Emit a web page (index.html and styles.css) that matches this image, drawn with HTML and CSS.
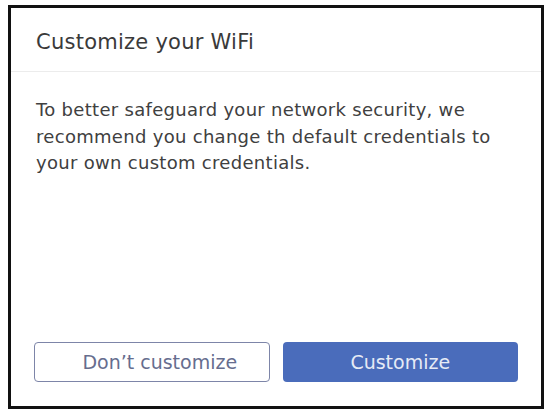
FILE: index.html
```html
<!DOCTYPE html>
<html>
<head>
<meta charset="utf-8">
<link rel="stylesheet" href="styles.css">
</head>
<body>
<div class="dialog">
  <div class="header">Customize your WiFi</div>
  <div class="body">
    <p class="message">To better safeguard your network security, we<br>recommend you change th default credentials to<br>your own custom credentials.</p>
  </div>
  <div class="actions">
    <button class="btn btn-outline">Don’t customize</button>
    <button class="btn btn-primary">Customize</button>
  </div>
</div>
</body>
</html>
```
FILE: styles.css
```css
html, body {
  margin: 0;
  padding: 0;
  background: #ffffff;
}
body {
  padding: 5px 6px 4px 8px;
  font-family: "DejaVu Sans", "Liberation Sans", sans-serif;
}
.dialog {
  box-sizing: border-box;
  width: 536px;
  height: 404px;
  border: 3px solid #111111;
  display: flex;
  flex-direction: column;
  background: #ffffff;
}
.header {
  height: 64px;
  box-sizing: border-box;
  padding: 22px 0 0 25px;
  font-size: 21px;
  letter-spacing: 0.25px;
  color: #3a3a3a;
  border-bottom: 1px solid #ececec;
}
.body {
  flex: 1;
  padding: 25px 10px 0 25px;
}
.message {
  margin: 0;
  font-size: 18px;
  letter-spacing: 0.3px;
  line-height: 26.5px;
  color: #404040;
  white-space: nowrap;
}
.actions {
  display: grid;
  grid-template-columns: 1fr 1fr;
  gap: 13px;
  padding: 0 23px 24px 23px;
}
.btn {
  box-sizing: border-box;
  height: 40px;
  border-radius: 4px;
  font-family: "DejaVu Sans", "Liberation Sans", sans-serif;
  font-size: 19px;
  cursor: pointer;
}
.btn-outline {
  background: #ffffff;
  border: 1.5px solid #7d85a8;
  color: #666d8e;
  padding-left: 22px;
}
.btn-primary {
  background: #4a6cbb;
  border: none;
  color: #e6ebf6;
}
```
